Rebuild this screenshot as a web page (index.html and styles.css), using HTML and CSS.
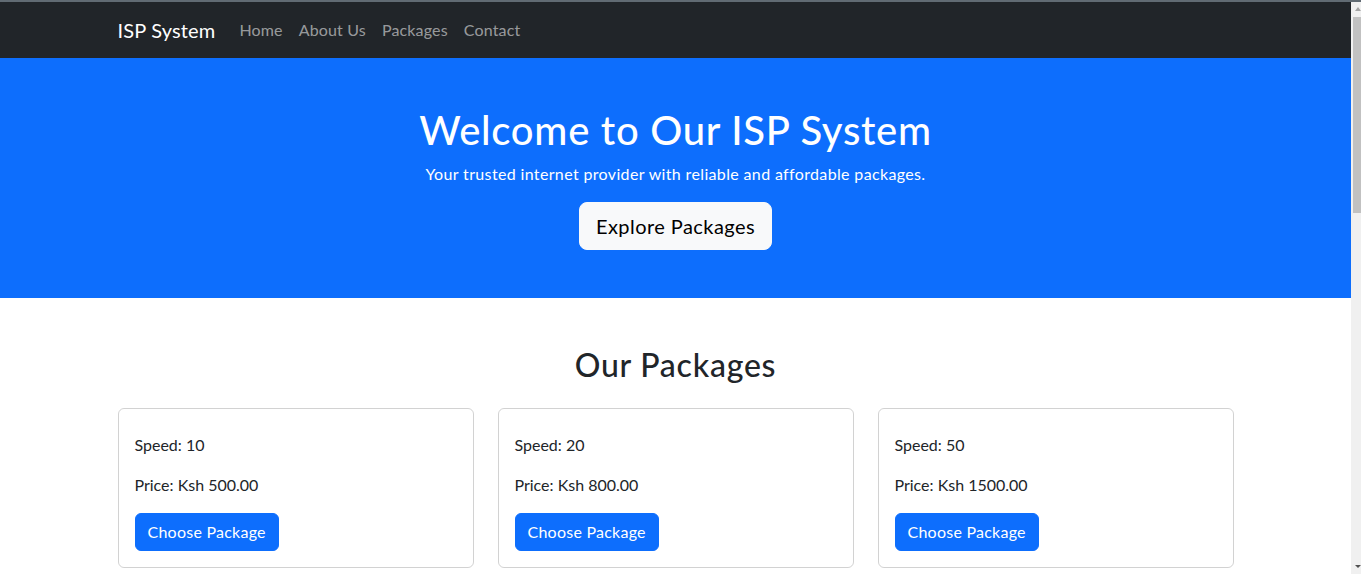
FILE: index.html
```html
<!DOCTYPE html>
<html lang="en">
<head>
<meta charset="utf-8">
<title>ISP System</title>
<link rel="stylesheet" href="styles.css">
</head>
<body>
<div class="topline"></div>
<div class="shell">
  <main class="page">
    <nav class="navbar">
      <div class="container nav-inner">
        <a class="brand" href="#">ISP System</a>
        <ul class="nav-links">
          <li><a href="#">Home</a></li>
          <li><a href="#">About Us</a></li>
          <li><a href="#">Packages</a></li>
          <li><a href="#">Contact</a></li>
        </ul>
      </div>
    </nav>
    <header class="hero">
      <div class="container">
        <h1>Welcome to Our ISP System</h1>
        <p>Your trusted internet provider with reliable and affordable packages.</p>
        <a class="btn btn-light-lg" href="#">Explore Packages</a>
      </div>
    </header>
    <section class="container packages">
      <h2>Our Packages</h2>
      <div class="cards">
        <div class="card">
          <div class="card-body">
            <h5 class="card-title"></h5>
            <p>Speed: 10</p>
            <p>Price: Ksh 500.00</p>
            <a class="btn btn-primary" href="#">Choose Package</a>
          </div>
        </div>
        <div class="card">
          <div class="card-body">
            <h5 class="card-title"></h5>
            <p>Speed: 20</p>
            <p>Price: Ksh 800.00</p>
            <a class="btn btn-primary" href="#">Choose Package</a>
          </div>
        </div>
        <div class="card">
          <div class="card-body">
            <h5 class="card-title"></h5>
            <p>Speed: 50</p>
            <p>Price: Ksh 1500.00</p>
            <a class="btn btn-primary" href="#">Choose Package</a>
          </div>
        </div>
      </div>
    </section>
    <section class="about">
      <div class="container">
        <h2>About Us</h2>
        <p>We provide fast, reliable and affordable internet to homes and businesses.</p>
      </div>
    </section>
    <section class="container contact">
      <h2>Contact Us</h2>
      <form class="contact-form">
        <label>Name</label>
        <input type="text">
        <label>Email</label>
        <input type="email">
        <label>Message</label>
        <textarea rows="4"></textarea>
        <a class="btn btn-primary" href="#">Send Message</a>
      </form>
    </section>
    <footer class="footer">
      <p>&copy; 2024 ISP System. All rights reserved.</p>
    </footer>
  </main>
  <aside class="scrollbar" aria-hidden="true">
    <div class="sb-btn">
      <svg width="10" height="15" viewBox="0 0 10 15"><polygon points="7,5 10,9 4,9" fill="#a3a3a3"/></svg>
    </div>
    <div class="sb-thumb"></div>
    <div class="sb-space"></div>
    <div class="sb-btn">
      <svg width="10" height="15" viewBox="0 0 10 15"><polygon points="4,6 10,6 7,9" fill="#505050"/></svg>
    </div>
  </aside>
</div>
</body>
</html>
```
FILE: styles.css
```css
* {
  box-sizing: border-box;
}
html,
body {
  height: 100%;
}
body {
  margin: 0;
  font-family: "Lato", "Open Sans", sans-serif;
  font-size: 16px;
  line-height: 1.5;
  color: #212529;
  background: #fff;
  overflow: hidden;
  display: flex;
  flex-direction: column;
}
a {
  text-decoration: none;
}
.topline {
  height: 2px;
  flex: none;
  background: #616b73;
}
.shell {
  flex: 1;
  min-height: 0;
  display: flex;
}
.page {
  flex: 1;
  min-width: 0;
  overflow-y: auto;
  scrollbar-width: none;
}
.page::-webkit-scrollbar {
  display: none;
}
.scrollbar {
  width: 10px;
  flex: none;
  background: #f0f0f0;
  display: flex;
  flex-direction: column;
}
.sb-btn {
  height: 15px;
  flex: none;
}
.sb-btn svg {
  display: block;
}
.sb-thumb {
  height: 196px;
  flex: none;
  margin-left: 2px;
  background: #c1c1c1;
}
.sb-space {
  flex: 1;
}
.container {
  max-width: 1140px;
  margin: 0 auto;
  padding: 0 12px;
}
.navbar {
  background: #212529;
  padding: 8px 0;
}
.nav-inner {
  display: flex;
  align-items: center;
}
.brand {
  color: #fff;
  font-size: 20px;
  line-height: 30px;
  padding: 5px 0;
  margin-right: 16px;
  letter-spacing: 0.008em;
}
.nav-links {
  display: flex;
  list-style: none;
  margin: 0;
  padding: 0;
}
.nav-links a {
  display: block;
  padding: 8px;
  color: rgba(255, 255, 255, 0.55);
  letter-spacing: 0.01em;
}
.hero {
  background: #0d6efd;
  color: #fff;
  text-align: center;
  padding: 48px 0;
}
.hero h1 {
  font-size: 40px;
  line-height: 48px;
  font-weight: 500;
  margin: 0 0 8px;
  letter-spacing: 0.018em;
}
.hero p {
  margin: 0 0 16px;
  letter-spacing: 0.022em;
}
.btn {
  display: inline-block;
  border: 1px solid transparent;
  font-size: 16px;
  line-height: 24px;
  padding: 6px 12px;
  border-radius: 6px;
  letter-spacing: 0.015em;
}
.btn-light-lg {
  background: #f8f9fa;
  border-color: #f8f9fa;
  color: #000;
  font-size: 20px;
  line-height: 30px;
  padding: 8px 16px;
  border-radius: 8px;
  letter-spacing: 0.022em;
}
.btn-primary {
  background: #0d6efd;
  border-color: #0d6efd;
  color: #fff;
}
.packages {
  padding-top: 48px;
  padding-bottom: 48px;
}
h2 {
  font-size: 32px;
  line-height: 38.4px;
  font-weight: 500;
  text-align: center;
  margin: 0 0 24px;
  letter-spacing: 0.024em;
}
.cards {
  display: grid;
  grid-template-columns: repeat(3, 1fr);
  gap: 24px;
}
.card {
  border: 1px solid rgba(0, 0, 0, 0.175);
  border-radius: 6px;
}
.card-body {
  padding: 16px;
}
.card-title {
  margin: 0 0 8px;
  font-size: 20px;
  line-height: 0;
}
.card-body p {
  margin: 0 0 16px;
}
.about {
  background: #f8f9fa;
  padding: 48px 0 360px;
}
.about p {
  text-align: center;
  margin: 0;
}
.contact {
  padding-top: 48px;
  padding-bottom: 48px;
}
.contact-form {
  display: flex;
  flex-direction: column;
  max-width: 600px;
  margin: 0 auto;
}
.contact-form label {
  margin-bottom: 8px;
}
.contact-form input,
.contact-form textarea {
  border: 1px solid #dee2e6;
  border-radius: 6px;
  padding: 6px 12px;
  font: inherit;
  margin-bottom: 16px;
}
.contact-form .btn {
  align-self: flex-start;
}
.footer {
  background: #212529;
  color: #fff;
  text-align: center;
  padding: 16px 0;
}
.footer p {
  margin: 0;
}
```
